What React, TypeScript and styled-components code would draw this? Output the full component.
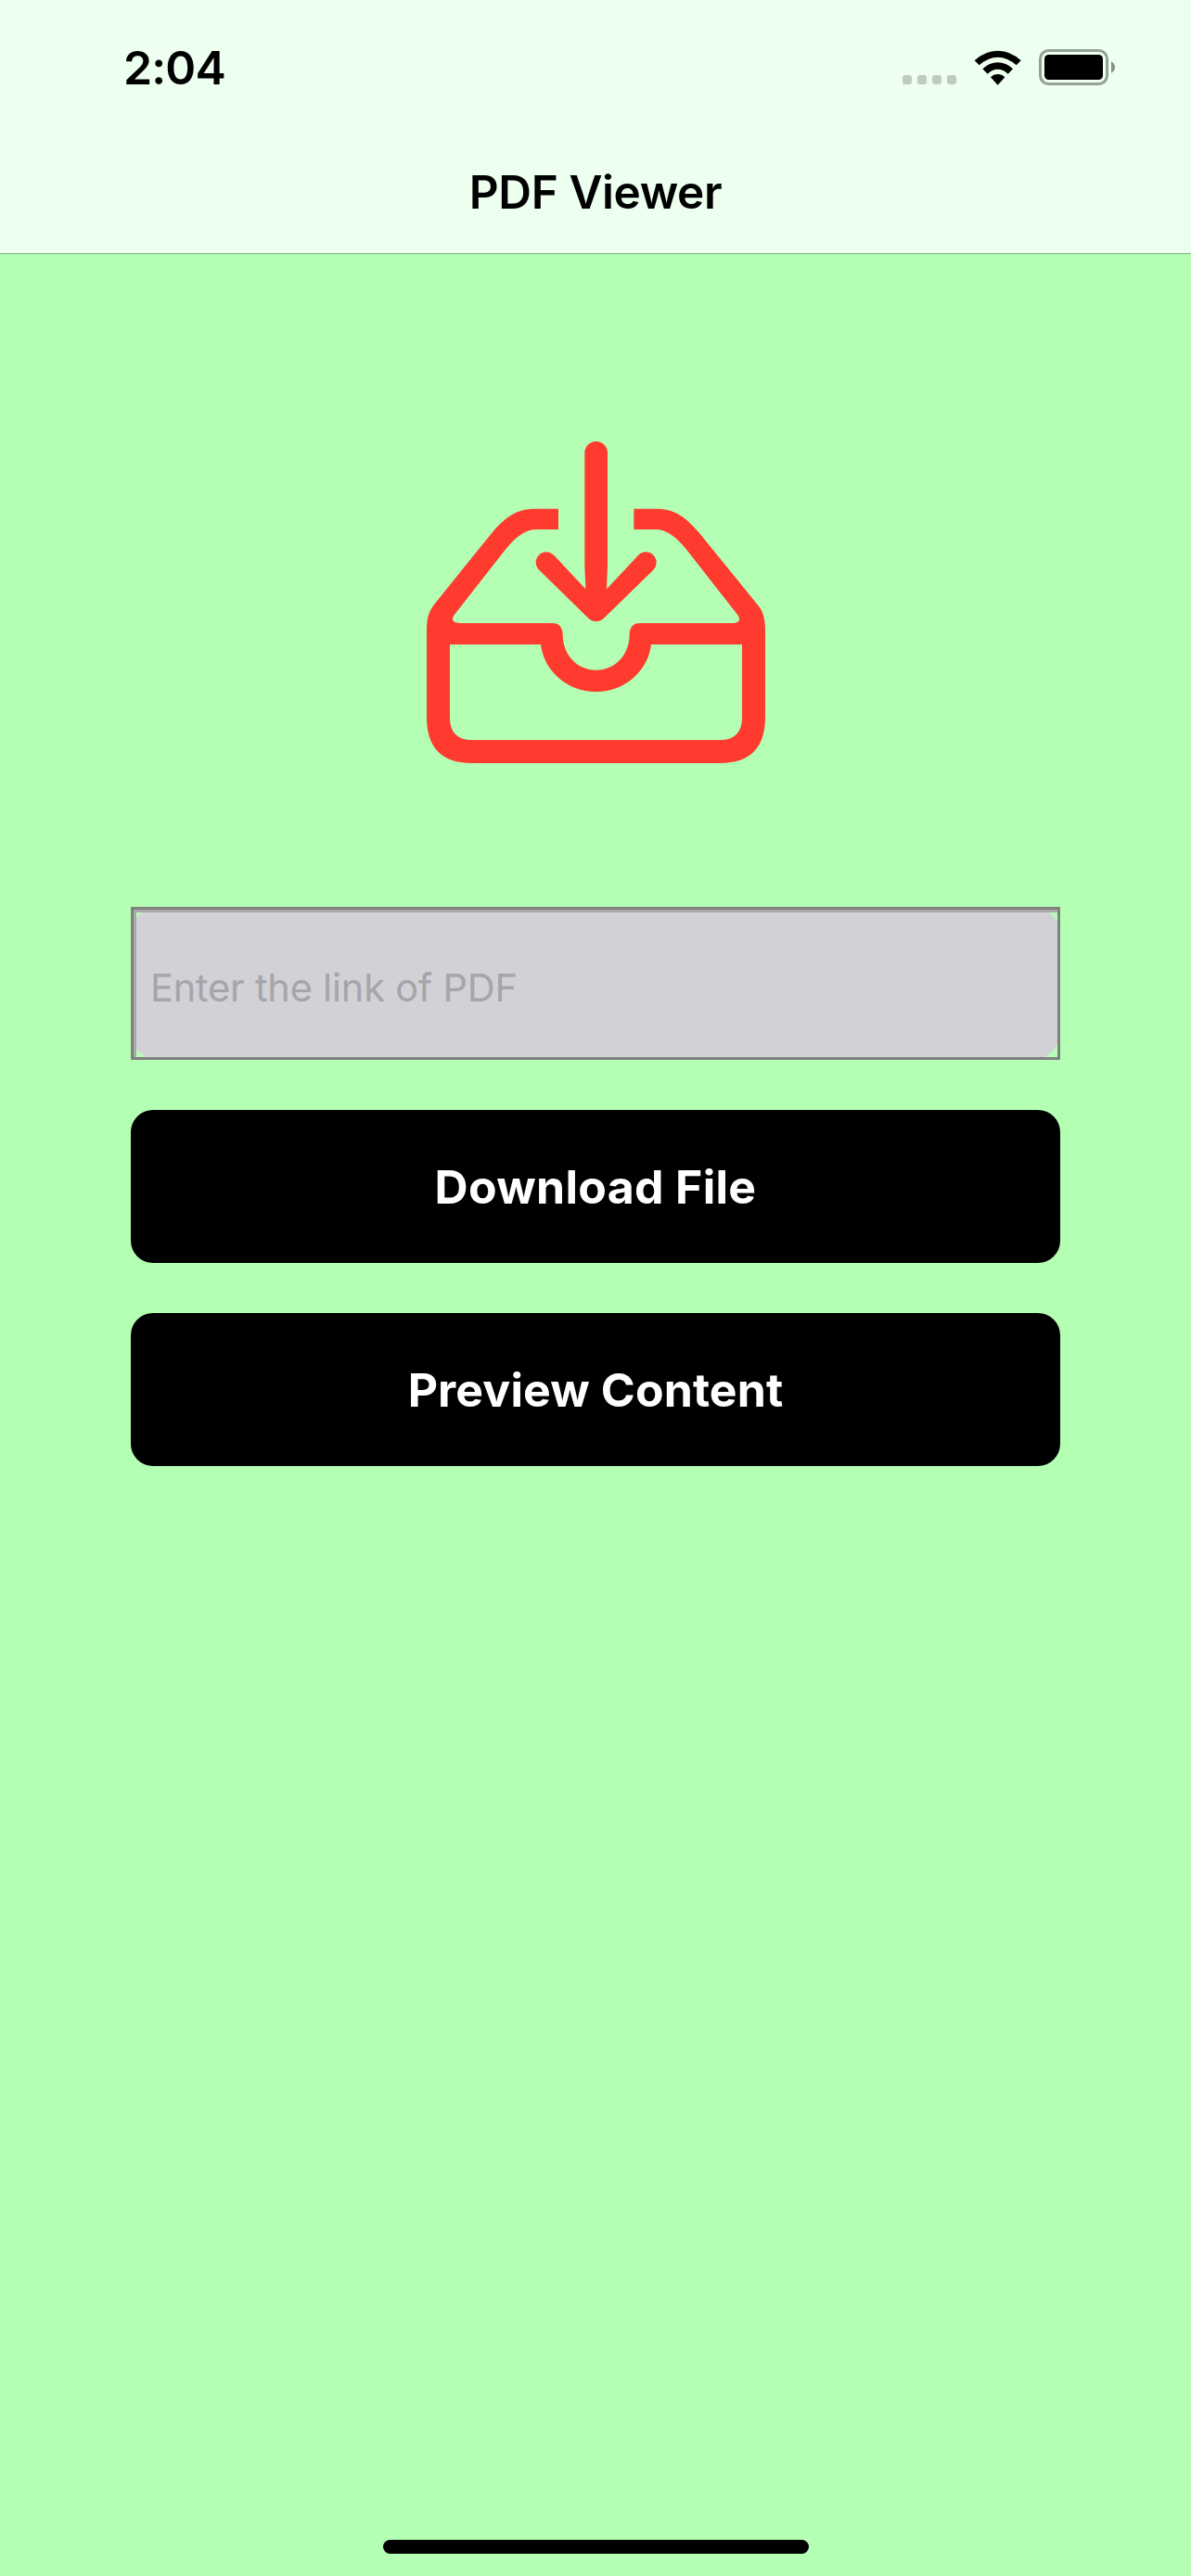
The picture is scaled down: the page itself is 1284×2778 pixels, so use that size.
import React from "react";
import styled, { createGlobalStyle } from "styled-components";

const GlobalStyle = createGlobalStyle`
  * { box-sizing: border-box; }
  html, body { margin: 0; padding: 0; background: #b5ffb5; }
`;

const sans = `Inter, "Liberation Sans", sans-serif`;

const Screen = styled.div`
  width: 1284px;
  height: 2778px;
  display: flex;
  flex-direction: column;
  background: #b5ffb5;
  font-family: ${sans};
  overflow: hidden;
`;

const Header = styled.header`
  height: 274px;
  flex: none;
  background: #edffee;
  border-bottom: 1px solid #7fb37f;
`;

const StatusBar = styled.div`
  height: 141px;
  padding: 53px 80px 0 133px;
  display: flex;
  justify-content: space-between;
  align-items: flex-start;
`;

const Clock = styled.time`
  font-size: 50px;
  line-height: 40px;
  font-weight: 600;
  letter-spacing: -0.9px;
  color: #000;
`;

const Indicators = styled.div`
  height: 40px;
  display: flex;
  align-items: flex-start;
`;

const Dots = styled.div`
  display: flex;
  gap: 6px;
  margin: 28px 19px 0 0;
`;

const Dot = styled.span`
  width: 10px;
  height: 10px;
  border-radius: 3px;
  background: #bdccbe;
`;

const WifiIcon = styled.svg`
  width: 51px;
  height: 38px;
  margin: 0.5px 19px 0 0;
  display: block;
`;

const BatteryIcon = styled.svg`
  width: 84px;
  height: 40px;
  display: block;
`;

const Title = styled.h1`
  margin: 0;
  padding-top: 34px;
  font-size: 49.5px;
  line-height: 64px;
  font-weight: 600;
  letter-spacing: -0.4px;
  text-align: center;
  color: #000;
`;

const Content = styled.main`
  flex: 1;
  padding: 202px 141px 0;
  display: flex;
  flex-direction: column;
  align-items: stretch;
`;

const TrayIcon = styled.svg`
  width: 365px;
  height: 347px;
  margin: 0 0 155px 319px;
  display: block;
`;

const Field = styled.label`
  position: relative;
  display: block;
  height: 165px;
  margin-bottom: 54px;

  &::after {
    content: "";
    position: absolute;
    inset: 0;
    border: 3px solid #808080;
    box-shadow: inset 3px 3px 0 #a9a9a9;
    pointer-events: none;
  }
`;

const LinkInput = styled.input`
  display: block;
  width: 100%;
  height: 165px;
  padding: 8px 21px 0;
  border: 0;
  outline: 0;
  border-radius: 30px;
  background: #d1d1d6;
  font-family: ${sans};
  font-size: 41.5px;
  letter-spacing: -0.2px;
  color: #000;

  &::placeholder {
    color: #a5a5aa;
    opacity: 1;
  }
`;

const Action = styled.button<{ $spacing: number }>`
  height: 165px;
  margin: 0 0 54px;
  padding: 0;
  border: 0;
  border-radius: 24px;
  background: #000;
  color: #fff;
  font-family: ${sans};
  font-size: 50px;
  font-weight: 700;
  letter-spacing: ${(p) => p.$spacing}px;
`;

const Footer = styled.footer`
  height: 39px;
  flex: none;
  display: flex;
  justify-content: center;
  align-items: flex-start;
`;

const HomeIndicator = styled.div`
  width: 459px;
  height: 15px;
  border-radius: 8px;
  background: #000;
`;

export default function App() {
  return (
    <Screen>
      <GlobalStyle />
      <Header>
        <StatusBar>
          <Clock>2:04</Clock>
          <Indicators>
            <Dots>
              <Dot />
              <Dot />
              <Dot />
              <Dot />
            </Dots>
            <WifiIcon viewBox="300 70 153 114">
              <path d="M302 104 Q335 72 377 72 Q419 72 452 104 L437 119 Q409 93 377 93 Q345 93 317 119 Z" />
              <path d="M328 131 Q350 110 377 110 Q404 110 426 131 L410 147 Q395 132 377 132 Q359 132 344 147 Z" />
              <path d="M354 158 Q364 148 377 148 Q390 148 400 158 L377 183 Z" />
            </WifiIcon>
            <BatteryIcon viewBox="510 69 252 120">
              <rect x="514.5" y="73.500" width="216" height="108" rx="27" fill="none" stroke="#94a295" strokeWidth="9" />
              <rect x="528" y="87" width="189" height="81" rx="14" />
              <path d="M744 109 Q756 116 756 127.500 Q756 139 744 146 Z" fill="#84918a" />
            </BatteryIcon>
          </Indicators>
        </StatusBar>
        <Title>PDF Viewer</Title>
      </Header>
      <Content>
        <TrayIcon viewBox="60 48 1095 1041" fill="#ff3b30">
          <path d="M571 85 A37 37 0 0 1 645 85 V450 L642 526 L741 420 C753 407 763 406 769 406 A34 34 0 0 1 803 440 Q803 453 793 464 L633 620 Q623 630 608 630 Q593 630 583 620 L424 464 Q413 453 413 440 A34 34 0 0 1 447 406 C455 406 465 409 475 420 L574 526 L571 450 Z" />
          <path
            fillRule="evenodd"
            d="M486 266 V333 H412 C384 333 352 352 318 394 L150 608 C139 624 143 636 168 636 H468 C487 636 500 650 500 672 C500 740 548 788 608 788 C668 788 716 740 716 672 C716 650 729 636 748 636 H1048 C1073 636 1076 624 1065 608 L897 394 C863 352 831 333 803 333 H730 V266 H805 C862 266 900 293 948 352 L1130 576 C1149 599 1155 623 1155 660 V940 C1155 1038 1108 1089 1010 1089 H205 C107 1089 60 1038 60 940 V660 C60 623 66 600 84 576 L266 350 C314 290 354 266 410 266 Z M135 705 V942 C135 989 160 1014 205 1014 H1010 C1055 1014 1080 989 1080 942 V705 H786 C776 790 702 858 608 858 C514 858 439 790 429 705 Z"
          />
        </TrayIcon>
        <Field>
          <LinkInput type="text" placeholder="Enter the link of PDF" />
        </Field>
        <Action $spacing={0.3}>Download File</Action>
        <Action $spacing={0.1}>Preview Content</Action>
      </Content>
      <Footer>
        <HomeIndicator />
      </Footer>
    </Screen>
  );
}
